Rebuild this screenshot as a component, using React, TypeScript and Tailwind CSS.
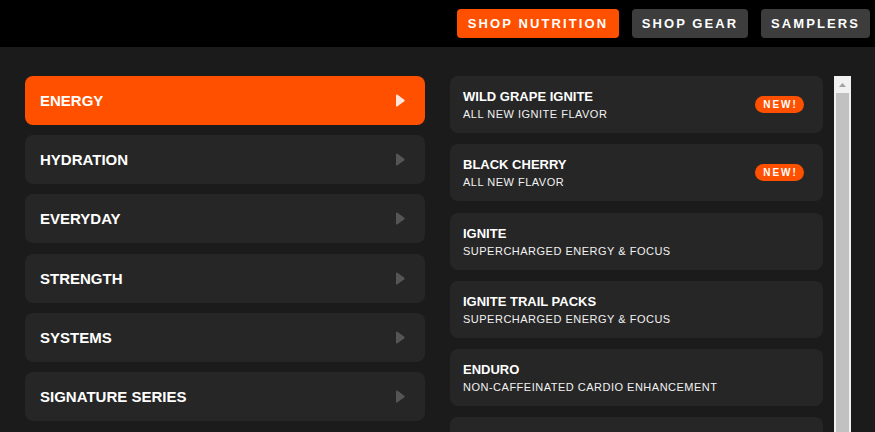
import React from "react";

const font = { fontFamily: '"Liberation Sans", Arial, sans-serif' };

const categories = [
  "ENERGY",
  "HYDRATION",
  "EVERYDAY",
  "STRENGTH",
  "SYSTEMS",
  "SIGNATURE SERIES",
];

const products = [
  { title: "WILD GRAPE IGNITE", sub: "ALL NEW IGNITE FLAVOR", isNew: true },
  { title: "BLACK CHERRY", sub: "ALL NEW FLAVOR", isNew: true },
  { title: "IGNITE", sub: "SUPERCHARGED ENERGY & FOCUS", isNew: false },
  { title: "IGNITE TRAIL PACKS", sub: "SUPERCHARGED ENERGY & FOCUS", isNew: false },
  { title: "ENDURO", sub: "NON-CAFFEINATED CARDIO ENHANCEMENT", isNew: false },
];

function Caret({ active }: { active: boolean }) {
  return (
    <svg width="9" height="13" viewBox="0 0 9 13" className="shrink-0">
      <path
        d="M1.2 0.6 Q0 0 0 1.4 L0 11.6 Q0 13 1.2 12.4 L8.3 7.3 Q9 6.5 8.3 5.7 Z"
        fill={active ? "#ffe6dc" : "#555555"}
      />
    </svg>
  );
}

export default function App() {
  return (
    <div className="h-[432px] w-[875px] overflow-hidden bg-[#1b1b1b] text-white" style={font}>
      <header className="flex h-[47px] items-start justify-end gap-[13px] bg-black pr-[5px] pt-[9px]">
        <button className="flex h-[29px] w-[162px] items-center justify-center rounded-[4px] bg-[#ff5000] text-[13px] font-bold tracking-[2.1px] text-white">
          SHOP NUTRITION
        </button>
        <button className="flex h-[29px] w-[116px] items-center justify-center rounded-[4px] bg-[#3d3d3d] text-[13px] font-bold tracking-[2.1px] text-white">
          SHOP GEAR
        </button>
        <button className="flex h-[29px] w-[109px] items-center justify-center rounded-[4px] bg-[#3d3d3d] text-[13px] font-bold tracking-[2.1px] text-white">
          SAMPLERS
        </button>
      </header>

      <main className="flex pl-[25px] pt-[29px]">
        <nav className="flex w-[400px] flex-col gap-[10.2px]">
          {categories.map((c, i) => {
            const active = i === 0;
            return (
              <div
                key={c}
                className={
                  "flex h-[49px] shrink-0 items-center justify-between rounded-[8px] pl-[15px] pr-[20px] " +
                  (active ? "bg-[#ff5000]" : "bg-[#262626]")
                }
              >
                <span className="text-[15px] font-bold leading-none">{c}</span>
                <Caret active={active} />
              </div>
            );
          })}
        </nav>

        <div className="ml-[25px] flex w-[373px] flex-col gap-[11.25px]">
          {products.map((p) => (
            <div
              key={p.title}
              className="flex h-[57px] shrink-0 items-center justify-between rounded-[8px] bg-[#262626] pl-[13px] pr-[19px]"
            >
              <div className="flex flex-col gap-[2px] pt-[1px]">
                <span className="text-[13px] font-bold leading-[16px]">{p.title}</span>
                <span className="text-[11px] leading-[14px] tracking-[0.5px] text-[#f2f2f2]">{p.sub}</span>
              </div>
              {p.isNew && (
                <span className="flex h-[17px] w-[49px] items-center justify-center rounded-full bg-[#ff5000] pl-[2px] text-[10px] font-bold tracking-[2px] text-white">
                  NEW!
                </span>
              )}
            </div>
          ))}
          <div className="h-[57px] shrink-0 rounded-[8px] bg-[#262626]" />
        </div>

        <div className="ml-[11px] flex h-[400px] w-[17px] flex-col bg-[#f1f1f1]">
          <div className="flex h-[17px] items-center justify-center">
            <svg width="7" height="4" viewBox="0 0 7 4">
              <path d="M3.5 0 L7 4 L0 4 Z" fill="#a3a3a3" />
            </svg>
          </div>
          <div className="mx-[2px] flex-1 bg-[#c1c1c1]" />
        </div>
      </main>
    </div>
  );
}
